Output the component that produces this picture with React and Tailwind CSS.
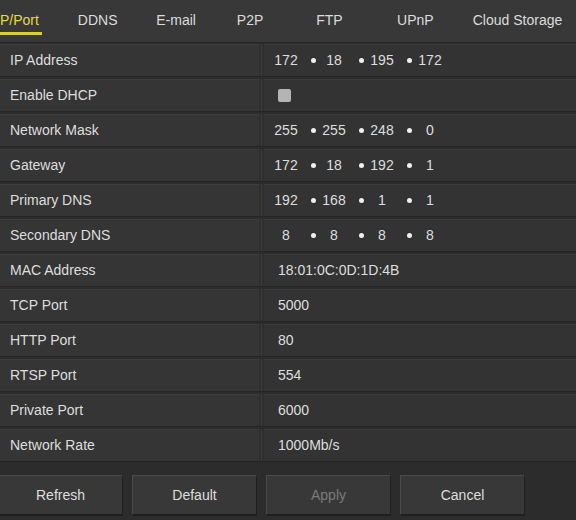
import React from 'react'

const tabs = [
  { label: 'P/Port', w: 'w-[42px] mr-[14px]', active: true },
  { label: 'DDNS', w: 'w-[84px]' },
  { label: 'E-mail', w: 'w-[74px]' },
  { label: 'P2P', w: 'w-[75px]' },
  { label: 'FTP', w: 'w-[85px]' },
  { label: 'UPnP', w: 'w-[88px]' },
  { label: 'Cloud Storage', w: 'w-[117px] shrink-0' },
]

const rows = [
  { label: 'IP Address', ip: ['172', '18', '195', '172'] },
  { label: 'Enable DHCP', check: true },
  { label: 'Network Mask', ip: ['255', '255', '248', '0'] },
  { label: 'Gateway', ip: ['172', '18', '192', '1'] },
  { label: 'Primary DNS', ip: ['192', '168', '1', '1'] },
  { label: 'Secondary DNS', ip: ['8', '8', '8', '8'] },
  { label: 'MAC Address', value: '18:01:0C:0D:1D:4B' },
  { label: 'TCP Port', value: '5000' },
  { label: 'HTTP Port', value: '80' },
  { label: 'RTSP Port', value: '554' },
  { label: 'Private Port', value: '6000' },
  { label: 'Network Rate', value: '1000Mb/s' },
]

function IpValue({ parts }) {
  return (
    <div className="flex items-center pl-[4px]">
      {parts.map((p, i) => (
        <React.Fragment key={i}>
          <span className="w-[36px] text-center">{p}</span>
          {i < 3 && (
            <span className="w-[12px] flex justify-end">
              <span className="w-[5px] h-[5px] rounded-full bg-[#f0f0f0]" />
            </span>
          )}
        </React.Fragment>
      ))}
    </div>
  )
}

function Row({ row }) {
  return (
    <div className="flex h-[32px] mb-[3px] shadow-[0_1px_0_#262626]">
      <div className="w-[259px] flex items-center pl-[10px] bg-[#353535] border-t border-[#3d3d3d]">
        {row.label}
      </div>
      <div className="w-[5px] flex justify-center bg-[#2f2f2f]">
        <div className="w-[1px] bg-[#3c3c3c]" />
      </div>
      <div className="flex-1 flex items-center bg-[#333333] border-t border-[#3b3b3b]">
        {row.ip && <IpValue parts={row.ip} />}
        {row.check && <span className="ml-[14px] w-[13px] h-[13px] rounded-[2px] bg-[#b4b4b4]" />}
        {row.value && <span className="pl-[14px]">{row.value}</span>}
      </div>
    </div>
  )
}

export default function App() {
  return (
    <div
      className="w-[576px] h-[520px] bg-[#2c2c2c] text-[#dedede] text-[14px] overflow-hidden"
      style={{ fontFamily: '"Liberation Sans", Arial, sans-serif' }}
    >
      {/* Tabs */}
      <div className="h-[43px] bg-[#383838] flex items-start border-b border-[#272727]">
        {tabs.map(t => (
          <div key={t.label} className={`${t.w} flex flex-col ${t.active ? 'items-start' : 'items-center'}`}>
            <span className={`pt-[11px] leading-[18px] whitespace-nowrap ${t.active ? 'text-[#e6dc3a]' : 'text-[#dcdcdc]'}`}>
              {t.label}
            </span>
            {t.active && <span className="mt-[3px] h-[3px] w-[42px] bg-[#d9d02c]" />}
          </div>
        ))}
      </div>

      {/* Rows */}
      <div className="pt-[1px]">
        {rows.map(r => <Row key={r.label} row={r} />)}
      </div>

      {/* Buttons */}
      <div className="flex gap-[10px] mt-[14px] -ml-[2px]">
        {['Refresh', 'Default', 'Apply', 'Cancel'].map(b => (
          <div
            key={b}
            className={`w-[124px] h-[39px] flex items-center justify-center bg-[#383838] border-t border-l border-[#4a4a4a] shadow-[1px_2px_0_#1f1f1f] ${b === 'Apply' ? 'text-[#7a7a7a]' : 'text-[#dedede]'}`}
          >
            {b}
          </div>
        ))}
      </div>
    </div>
  )
}
